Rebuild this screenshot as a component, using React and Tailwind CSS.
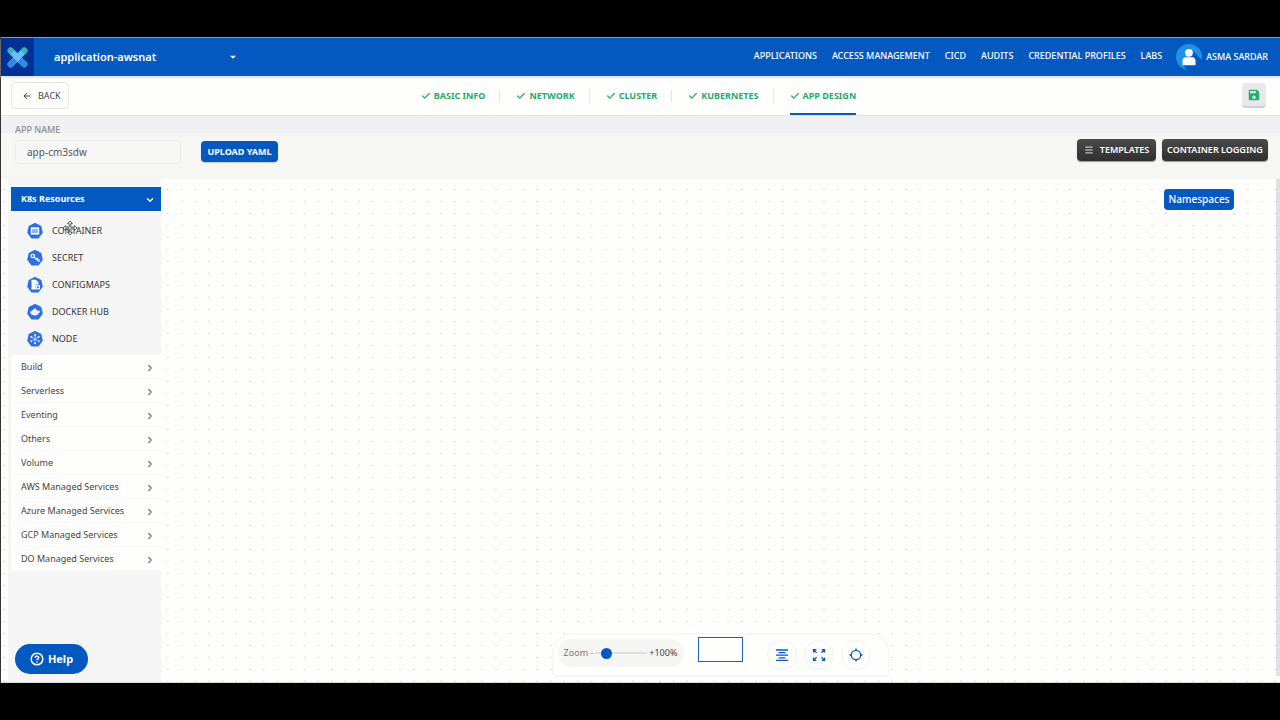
import { ArrowLeft, Check, ChevronDown, ChevronRight, CircleHelp, Menu } from "lucide-react";
import { MdArrowDropDown, MdSave } from "react-icons/md";

const NAV = ["APPLICATIONS", "ACCESS MANAGEMENT", "CICD", "AUDITS", "CREDENTIAL PROFILES", "LABS"];
const STEPS = ["BASIC INFO", "NETWORK", "CLUSTER", "KUBERNETES", "APP DESIGN"];
const GROUPS = [
  "Build",
  "Serverless",
  "Eventing",
  "Others",
  "Volume",
  "AWS Managed Services",
  "Azure Managed Services",
  "GCP Managed Services",
  "DO Managed Services",
];

const GLYPHS = {
  CONTAINER: (
    <g>
      <rect x="3.8" y="4.4" width="8.4" height="7.2" fill="#fff" />
      <path d="M6 6v4M8 6v4M10 6v4" stroke="#2f6fe4" strokeWidth="1" />
    </g>
  ),
  SECRET: (
    <g fill="none" stroke="#fff" strokeWidth="1.2" strokeLinecap="round">
      <circle cx="5.8" cy="6" r="1.7" />
      <path d="M7.2 7.3L12 11.4M9.4 9.4L10.4 8.3M11.2 10.8L12.2 9.7" />
    </g>
  ),
  CONFIGMAPS: (
    <g>
      <path d="M4.500 2.800h4.400l2.600 2.600v2.100H8.600v5H4.500z" fill="#fff" />
      <rect x="9.200" y="8.800" width="3.200" height="3" fill="none" stroke="#fff" strokeWidth="1.200" />
    </g>
  ),
  "DOCKER HUB": (
    <path
      d="M3 7.600h1.800V6.200h1.800V4.800h2.600v1.400h1.200v1.200c.9 0 1.100-.8 1.100-1.400.9.500 1 1 .8 1.600h1c-.2.900-.9 1.200-1.600 1.300-.6 1.700-2 2.500-3.900 2.500-2.700 0-4.400-1.200-4.800-3.800z"
      fill="#fff"
    />
  ),
  NODE: (
    <g stroke="#fff" strokeWidth="0.8" fill="#fff">
      <path d="M8 4v8M4.500 6l7 4M11.500 6l-7 4" strokeDasharray="2.600 1" />
      <circle cx="8" cy="3.800" r="0.600" />
      <circle cx="8" cy="12.200" r="0.600" />
      <circle cx="4.300" cy="5.900" r="0.600" />
      <circle cx="11.700" cy="5.900" r="0.600" />
      <circle cx="4.300" cy="10.100" r="0.600" />
      <circle cx="11.700" cy="10.100" r="0.600" />
    </g>
  ),
};

function ResourceIcon({ name }) {
  return (
    <svg viewBox="0 0 16 16" className="size-4 shrink-0" aria-hidden="true">
      <path
        d="M8 .8L13.600 3.500L15 9.600L11.100 14.700H4.900L1 9.600L2.400 3.500Z"
        fill="#2f6fe4"
        stroke="#2f6fe4"
        strokeWidth="1.600"
        strokeLinejoin="round"
      />
      {GLYPHS[name]}
    </svg>
  );
}

function Logo() {
  return (
    <svg viewBox="0 0 20 20" className="size-[21px]" aria-hidden="true">
      <path d="M3.500 3.500L16.500 16.500M16.500 3.500L3.500 16.500" stroke="#4aa6ea" strokeWidth="6" strokeLinecap="round" />
      <path d="M3.500 3.500L4.500 4.500M16.500 3.500L15.500 4.500" stroke="#35b3ae" strokeWidth="5.600" strokeLinecap="round" />
      <path d="M3.500 16.500L6.500 13.500M16.500 16.500L13.500 13.500" stroke="#3386e4" strokeWidth="5.600" strokeLinecap="round" />
      <path d="M5 5L10 10L15 5" stroke="#69bff5" strokeWidth="5" strokeLinejoin="round" fill="none" />
      <path d="M10 5.800L14.200 10L10 14.200L5.800 10Z" fill="#69bff5" />
    </svg>
  );
}

function Avatar() {
  return (
    <svg viewBox="0 0 26 26" className="size-[26px]" aria-hidden="true">
      <circle cx="13" cy="13" r="13" fill="#1e93e3" />
      <path d="M16 6L26 16V26H11L7 21Z" fill="#0459c1" />
      <circle cx="13" cy="8.800" r="3.900" fill="#fff" />
      <path d="M6.500 21.200v-4.500c0-2 1.300-3.500 3.500-3.500h6c2.200 0 3.500 1.500 3.500 3.500v4.500z" fill="#fff" />
    </svg>
  );
}

function MoveCursor() {
  return (
    <svg viewBox="0 0 16 16" className="size-4" aria-hidden="true">
      <path
        d="M8 1l2.400 2.600H8.800v3.600h3.600V5.600L15 8l-2.600 2.400V8.800H8.800v3.600h1.600L8 15l-2.400-2.600h1.600V8.800H3.600v1.600L1 8l2.600-2.400v1.600h3.600V3.600H5.600z"
        fill="#fff"
        stroke="#333"
        strokeWidth="0.800"
      />
    </svg>
  );
}

function AlignIcon() {
  return (
    <svg viewBox="0 0 14 14" className="w-3.5" fill="none" stroke="#0459c1" strokeWidth="1.300">
      <path d="M1 2h12M3.500 4.600h7M1 7.200h12M3.500 9.800h7M1 12.300h12" />
    </svg>
  );
}

function ExpandIcon() {
  return (
    <svg viewBox="0 0 14 14" className="w-3.5" fill="none" stroke="#0459c1" strokeWidth="1.300">
      <path d="M1.500 4.500V1.700h2.800M9.700 1.700h2.800v2.800M12.500 9.500v2.800H9.700M4.300 12.300H1.500V9.500M1.700 1.900L4.600 4.800M12.300 1.900L9.400 4.800M12.300 12.100L9.400 9.200M1.700 12.100L4.600 9.200" />
    </svg>
  );
}

function TargetIcon() {
  return (
    <svg viewBox="0 0 14 14" className="w-3.5" fill="none" stroke="#0459c1" strokeWidth="1.300">
      <circle cx="7" cy="7" r="4.700" />
      <path d="M7 .5v2M7 11.500v2M.5 7h2M11.500 7h2" />
    </svg>
  );
}

function DotGrid() {
  return (
    <svg className="absolute inset-0 size-full" aria-hidden="true">
      <defs>
        <pattern id="dots" x="-4" y="10" width="13.67" height="12" patternUnits="userSpaceOnUse">
          <rect x="6" y="0" width="1.600" height="1" fill="#cfcfd3" />
        </pattern>
      </defs>
      <rect width="100%" height="100%" fill="url(#dots)" />
    </svg>
  );
}

function TopBar() {
  return (
    <header className="relative z-10 flex h-[39px] items-center border-t border-[#8fa38c] bg-[#0459c1] pr-3 text-white shadow-[0_2px_2px_#dfe1e8]">
      <a href="#home" aria-label="Home" className="flex h-full w-[33px] items-center justify-center bg-[#023095]">
        <Logo />
      </a>
      <button className="ml-5 flex w-[186px] items-center justify-between text-[11px] font-semibold">
        application-awsnat
        <MdArrowDropDown className="size-3.5" />
      </button>
      <nav className="ml-auto flex items-center gap-[15px] pb-0.5 text-[9px] font-medium">
        {NAV.map((n) => (
          <a key={n} href="#nav">{n}</a>
        ))}
      </nav>
      <button className="ml-3.5 flex items-center gap-1 text-[9px] font-medium">
        <Avatar />
        ASMA SARDAR
      </button>
    </header>
  );
}

function StepBar() {
  return (
    <div className="grid h-10 grid-cols-[1fr_auto_1fr] items-center border-b border-[#e4e5e8] bg-[#fefefd] pr-3.5 pl-2.5">
      <button className="flex h-[27px] w-[58px] items-center gap-1.5 justify-self-start rounded border border-[#e6e6ea] pl-2.5 text-[9px] text-[#444]">
        <ArrowLeft className="size-2.5 text-[#222]" />
        BACK
      </button>
      <ol className="flex h-full text-[9px] font-bold text-[#24ab6c]">
        {STEPS.map((s, i) => (
          <li key={s} className="flex h-full items-center">
            {i > 0 && <span className="mr-4 ml-3.5 h-3 w-px bg-[#e3e4e8]" />}
            <a
              href="#step"
              className={
                "flex h-full items-center gap-[3px] border-y-2 border-t-transparent " +
                (i === 4 ? "border-b-[#0459c1]" : "border-b-transparent")
              }
            >
              <Check className="size-2.5" strokeWidth={3} />
              {s}
            </a>
          </li>
        ))}
      </ol>
      <button
        aria-label="Save"
        className="flex h-[25px] w-6 items-center justify-center justify-self-end rounded-sm border-b-2 border-[#cfcfd3] bg-[#e8e8ec] text-[#1fb26b]"
      >
        <MdSave className="size-3.5" />
      </button>
    </div>
  );
}

function AppToolbar() {
  return (
    <div className="flex h-[63px] items-start bg-[linear-gradient(#f0f0f3_0_17px,#f6f6f5_17px)] pr-3 pl-3.5">
      <div className="flex w-[166px] flex-col gap-[3px] pt-1.5">
        <label htmlFor="app-name" className="text-[9px] leading-[15px] font-medium text-[#8d8d8d]">
          APP NAME
        </label>
        <input
          id="app-name"
          defaultValue="app-cm3sdw"
          className="h-6 w-full rounded-sm border border-[#ececee] bg-[#f7f7f6] px-[11px] text-[10px] text-[#555] outline-none"
        />
      </div>
      <button className="mt-[25px] ml-5 h-[21px] w-[77px] rounded-sm bg-[#0459c1] text-[9px] font-bold whitespace-nowrap text-white shadow-[0_1px_1px_#c4ccda]">
        UPLOAD YAML
      </button>
      <div className="mt-[23px] ml-auto flex gap-1.5 text-[9px] font-semibold whitespace-nowrap text-white">
        <button className="flex h-[22px] w-[79px] items-center justify-center gap-1.5 rounded-sm bg-linear-to-b from-[#4a4a4a] to-[#303030] shadow-[0_1px_1px_#999]">
          <Menu className="size-2.5" />
          TEMPLATES
        </button>
        <button className="h-[22px] w-[106px] rounded-sm bg-linear-to-b from-[#4a4a4a] to-[#303030] shadow-[0_1px_1px_#999]">
          CONTAINER LOGGING
        </button>
      </div>
    </div>
  );
}

function Sidebar() {
  return (
    <aside className="relative ml-[7px] flex w-[153px] flex-col bg-[#f5f5f5] pt-2 pl-[3px]">
      <button className="flex h-6 items-center justify-between bg-[#0459c1] pr-1.5 pl-2.5 text-[9px] font-bold text-white">
        K8s Resources
        <ChevronDown className="mt-0.5 size-2.5" strokeWidth={3.5} />
      </button>
      <ul className="h-36 pt-1.5 pl-4">
        {Object.keys(GLYPHS).map((name) => (
          <li key={name} className="flex h-[27px] items-center text-[9px] text-[#333]">
            <button className="flex cursor-move items-center gap-[9px]">
              <ResourceIcon name={name} />
              {name}
            </button>
          </li>
        ))}
      </ul>
      <ul className="bg-[#fefefd] text-[9px] text-[#444]">
        {GROUPS.map((g) => (
          <li key={g} className="h-6 border-b border-[#f7f7fa]">
            <button className="flex h-full w-full items-center justify-between pr-1.5 pl-2.5">
              {g}
              <ChevronRight className="mt-0.5 size-2.5 text-[#777]" strokeWidth={3} />
            </button>
          </li>
        ))}
      </ul>
      <div className="pointer-events-none absolute top-[41px] left-[54px]">
        <MoveCursor />
      </div>
    </aside>
  );
}

function ZoomPanel() {
  const round = "flex size-[30px] items-center justify-center rounded-full border border-[#f0f0f2]";
  return (
    <div className="absolute inset-x-0 bottom-[5px] ml-40 flex justify-center">
      <div className="flex h-11 w-[338px] items-start rounded-t-[20px] rounded-b-sm border-2 border-[#f7f7fa] bg-[#fefefd] pl-1">
        <label className="mt-1 flex h-7 w-[126px] shrink-0 items-center justify-center rounded-full bg-[#f5f5f4] text-[9px] text-[#777]">
          Zoom -
          <input
            type="range"
            aria-label="Zoom"
            defaultValue="15"
            className="mx-0.5 h-0.5 w-[52px] appearance-none bg-[#e0dfe3] [&::-webkit-slider-thumb]:size-[11px] [&::-webkit-slider-thumb]:appearance-none [&::-webkit-slider-thumb]:rounded-full [&::-webkit-slider-thumb]:bg-[#0459c1]"
          />
          <span className="text-[#444]">+100%</span>
        </label>
        <div className="mt-0.5 ml-3.5 h-[25px] w-[45px] shrink-0 border border-[#1f5fb0]" />
        <div className="mt-[5px] ml-6 flex gap-[7px]">
          <button aria-label="Align" className={round}><AlignIcon /></button>
          <button aria-label="Fit to screen" className={round}><ExpandIcon /></button>
          <button aria-label="Center" className={round}><TargetIcon /></button>
        </div>
      </div>
    </div>
  );
}

export default function App() {
  return (
    <div className="flex min-h-screen flex-col bg-black py-[37px] font-['Noto_Sans','Open_Sans',sans-serif]">
      <div className="flex flex-1 flex-col border-l border-[#333] bg-[#fefefd]">
        <TopBar />
        <StepBar />
        <AppToolbar />
        <main className="relative flex flex-1 border-b border-[#dcdcdc]">
          <DotGrid />
          <Sidebar />
          <button className="absolute top-[10px] right-[46px] h-[21px] w-[70px] rounded-sm bg-[#0459c1] text-[10px] font-medium text-white">
            Namespaces
          </button>
          <div className="absolute top-0 right-0 bottom-1.5 w-1 bg-[#e0e0e3]" />
          <ZoomPanel />
          <button className="absolute bottom-2 left-3.5 flex h-[30px] w-[73px] items-center justify-center gap-1 rounded-full bg-[#0459c1] text-[11px] font-bold text-white">
            <CircleHelp className="size-3.5" strokeWidth={2.5} />
            Help
          </button>
        </main>
      </div>
    </div>
  );
}
